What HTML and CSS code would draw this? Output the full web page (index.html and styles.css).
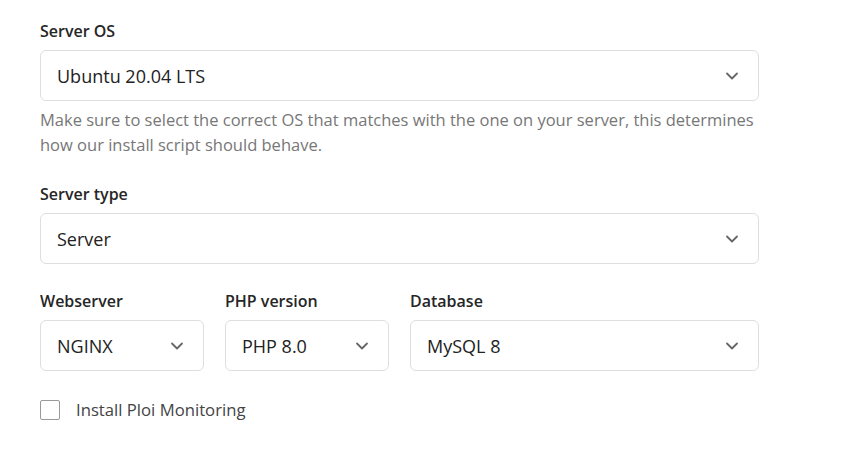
FILE: index.html
```html
<!DOCTYPE html>
<html lang="en">
<head>
    <meta charset="UTF-8">
    <meta name="viewport" content="width=device-width, initial-scale=1.0">
    <title>Create server</title>
    <link rel="stylesheet" href="styles.css">
</head>
<body>

    <form class="server-form">
        <!-- Server OS -->
        <div class="field">
            <label class="field-label">Server OS</label>
            <div class="select">
                <span>Ubuntu 20.04 LTS</span>
                <svg class="chevron" viewBox="0 0 20 20"><path d="M5 7.5l5 5 5-5" /></svg>
            </div>
            <p class="help">Make sure to select the correct OS that matches with the one on your server, this determines how our install script should behave.</p>
        </div>

        <!-- Server type -->
        <div class="field">
            <label class="field-label">Server type</label>
            <div class="select">
                <span>Server</span>
                <svg class="chevron" viewBox="0 0 20 20"><path d="M5 7.5l5 5 5-5" /></svg>
            </div>
        </div>

        <!-- Stack -->
        <div class="field-row">
            <div class="field small">
                <label class="field-label">Webserver</label>
                <div class="select">
                    <span>NGINX</span>
                    <svg class="chevron" viewBox="0 0 20 20"><path d="M5 7.5l5 5 5-5" /></svg>
                </div>
            </div>
            <div class="field small">
                <label class="field-label">PHP version</label>
                <div class="select">
                    <span>PHP 8.0</span>
                    <svg class="chevron" viewBox="0 0 20 20"><path d="M5 7.5l5 5 5-5" /></svg>
                </div>
            </div>
            <div class="field wide">
                <label class="field-label">Database</label>
                <div class="select">
                    <span>MySQL 8</span>
                    <svg class="chevron" viewBox="0 0 20 20"><path d="M5 7.5l5 5 5-5" /></svg>
                </div>
            </div>
        </div>

        <!-- Monitoring -->
        <label class="checkbox">
            <span class="box"></span>
            <span>Install Ploi Monitoring</span>
        </label>
    </form>

</body>
</html>
```

FILE: styles.css
```css
/* Global Styles */
body {
    font-family: "Open Sans", "Noto Sans", sans-serif;
    background-color: #ffffff;
    margin: 0;
    padding: 19px 40px;
    color: #1f1f1f;
}

.server-form {
    width: 719px;
}

/* Fields */
.field {
    margin-bottom: 25px;
}

.field-label {
    display: block;
    font-size: 16px;
    font-weight: 600;
    line-height: 24px;
    margin-bottom: 7px;
    color: #262626;
}

.select {
    display: flex;
    align-items: center;
    justify-content: space-between;
    height: 51px;
    box-sizing: border-box;
    padding: 0 16px;
    border: 1px solid #dedede;
    border-radius: 6px;
    font-size: 18px;
    color: #222;
    background: #fff;
}

.chevron {
    width: 20px;
    height: 20px;
    fill: none;
    stroke: #666;
    stroke-width: 1.8;
    stroke-linecap: round;
    stroke-linejoin: round;
}

.help {
    margin: 6px 0 0;
    font-size: 16.5px;
    line-height: 25px;
    color: #777;
}

/* Row of three */
.field-row {
    display: flex;
    gap: 21px;
}

.field-row .small {
    width: 164px;
}

.field-row .wide {
    flex: 1;
}

/* Checkbox */
.checkbox {
    display: flex;
    align-items: center;
    gap: 16px;
    font-size: 16.7px;
    line-height: 24px;
    color: #444;
    margin-top: 2px;
}

.checkbox .box {
    width: 20px;
    height: 20px;
    box-sizing: border-box;
    border: 1px solid #999;
    border-radius: 2px;
}
```
